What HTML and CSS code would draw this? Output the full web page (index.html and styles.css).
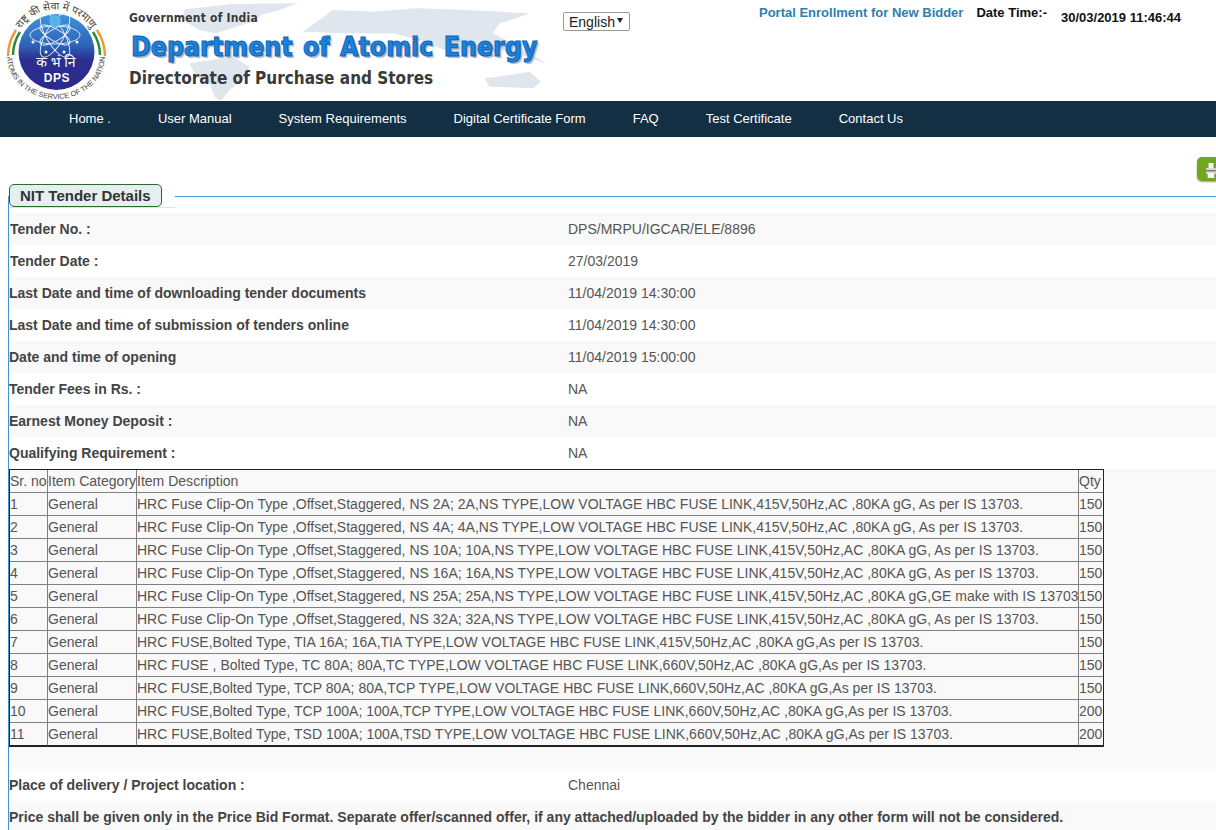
FILE: index.html
```html
<!DOCTYPE html>
<html lang="en">
<head>
<meta charset="utf-8">
<title>NIT Tender Details</title>
<link rel="stylesheet" href="styles.css">
</head>
<body>
<header class="site-header">
  <svg class="map" viewBox="0 0 1243 303" aria-hidden="true">
    <path d="M155 28 L300 12 L495 10 L440 30 L385 45 L360 65 L310 80 L250 100 L200 90 L150 60 Z"/>
    <path d="M510 95 L560 60 L600 30 L720 35 L850 25 L1000 30 L1190 40 L1150 55 L1100 70 L1080 100 L1140 130 L1240 190 L1190 175 L1130 150 L1040 165 L950 155 L860 120 L780 100 L640 100 Z"/>
    <path d="M170 190 L300 170 L350 200 L330 240 L290 270 L265 303 L245 290 L230 250 L190 230 Z"/>
    <path d="M1055 235 L1130 225 L1190 215 L1225 245 L1200 265 L1130 262 L1070 260 Z"/>
  </svg>
  <svg class="logo" viewBox="0 0 112 101" role="img" aria-label="DPS emblem">
    <defs>
      <linearGradient id="globe" x1="0" y1="0" x2="0" y2="1">
        <stop offset="0" stop-color="#3f95da"/>
        <stop offset=".42" stop-color="#2f62b6"/>
        <stop offset=".6" stop-color="#2b2f90"/>
        <stop offset="1" stop-color="#2b2a8c"/>
      </linearGradient>
      <path id="arcTop" d="M17 36 A42 42 0 0 1 95 36"/>
      <path id="arcBottom" d="M7 56 A49 43 0 0 0 105 56"/>
    </defs>
    <circle cx="56.5" cy="52" r="38" fill="url(#globe)"/>
    <g class="orbits">
      <ellipse cx="55" cy="35" rx="25" ry="9"/>
      <ellipse cx="55" cy="35" rx="25" ry="9" transform="rotate(60 55 35)"/>
      <ellipse cx="55" cy="35" rx="25" ry="9" transform="rotate(120 55 35)"/>
      <ellipse cx="55" cy="35" rx="17" ry="6" transform="rotate(30 55 35)"/>
      <ellipse cx="55" cy="35" rx="17" ry="6" transform="rotate(150 55 35)"/>
    </g>
    <circle class="sun" cx="55" cy="21" r="6"/>
    <circle class="dot" cx="33" cy="42" r="1.5"/><circle class="dot" cx="77" cy="42" r="1.5"/>
    <circle class="dot" cx="46" cy="52" r="1.5"/><circle class="dot" cx="64" cy="52" r="1.5"/>
    <path class="arc-o" d="M8 56 A48 48 0 0 1 16 30"/>
    <path class="arc-g" d="M13 55 A43 43 0 0 1 20 32"/>
    <path class="arc-o" d="M105 56 A48 48 0 0 0 97 30"/>
    <path class="arc-g" d="M100 55 A43 43 0 0 0 93 32"/>
    <text class="hi-top"><textPath href="#arcTop" startOffset="50%" text-anchor="middle">राष्ट्र की सेवा में परमाणु</textPath></text>
    <text class="en-ring"><textPath href="#arcBottom" startOffset="50%" text-anchor="middle">ATOMS IN THE SERVICE OF THE NATION</textPath></text>
    <text class="hi-mid" x="56" y="67" text-anchor="middle">क भं नि</text>
    <text class="dps" x="57" y="82" text-anchor="middle">DPS</text>
  </svg>
  <div class="brand">
    <div class="gov">Government of India</div>
    <div class="dept">Department of Atomic Energy</div>
    <div class="dir">Directorate of Purchase and Stores</div>
  </div>
  <div class="lang"><select class="lang-select"><option>English</option><option>Hindi</option></select></div>
  <div class="info">
    <a class="portal" href="#">Portal Enrollment for New Bidder</a>
    <span class="dt-label">Date Time:-</span>
    <span class="dt-value">30/03/2019 11:46:44</span>
  </div>
</header>
<nav class="nav">
  <a href="#">Home .</a>
  <a href="#">User Manual</a>
  <a href="#">System Requirements</a>
  <a href="#">Digital Certificate Form</a>
  <a href="#">FAQ</a>
  <a href="#">Test Certificate</a>
  <a href="#">Contact Us</a>
</nav>
<div class="tools">
  <button class="print" type="button" aria-label="Print">
    <svg viewBox="0 0 12 17" width="10" height="17" preserveAspectRatio="none"><rect x="3" y="1" width="6" height="5" fill="#f2f2f2"/><rect x="0" y="6" width="12" height="6" rx="1" fill="#d9d9d9"/><rect x="0" y="8" width="12" height="1.4" fill="#6f7f6f"/><rect x="2" y="11" width="8" height="5" fill="#f5f5f5"/></svg>
  </button>
</div>
<fieldset class="panel">
  <legend class="panel-legend"><span class="panel-title">NIT Tender Details</span></legend>
  <div class="row tint"><div class="label in">Tender No. :</div><div class="value">DPS/MRPU/IGCAR/ELE/8896</div></div>
  <div class="row"><div class="label in">Tender Date :</div><div class="value">27/03/2019</div></div>
  <div class="row tint"><div class="label">Last Date and time of downloading tender documents</div><div class="value">11/04/2019 14:30:00</div></div>
  <div class="row"><div class="label">Last Date and time of submission of tenders online</div><div class="value">11/04/2019 14:30:00</div></div>
  <div class="row tint"><div class="label">Date and time of opening</div><div class="value">11/04/2019 15:00:00</div></div>
  <div class="row"><div class="label">Tender Fees in Rs. :</div><div class="value">NA</div></div>
  <div class="row tint"><div class="label">Earnest Money Deposit :</div><div class="value">NA</div></div>
  <div class="row"><div class="label">Qualifying Requirement :</div><div class="value">NA</div></div>
  <div class="table-wrap tint">
    <table class="items">
      <colgroup><col class="c1"><col class="c2"><col class="c3"><col class="c4"></colgroup>
      <tr><td>Sr. no</td><td>Item Category</td><td>Item Description</td><td>Qty</td></tr>
      <tr><td>1</td><td>General</td><td>HRC Fuse Clip-On Type ,Offset,Staggered, NS 2A; 2A,NS TYPE,LOW VOLTAGE HBC FUSE LINK,415V,50Hz,AC ,80KA gG, As per IS 13703.</td><td>150</td></tr>
      <tr><td>2</td><td>General</td><td>HRC Fuse Clip-On Type ,Offset,Staggered, NS 4A; 4A,NS TYPE,LOW VOLTAGE HBC FUSE LINK,415V,50Hz,AC ,80KA gG, As per IS 13703.</td><td>150</td></tr>
      <tr><td>3</td><td>General</td><td>HRC Fuse Clip-On Type ,Offset,Staggered, NS 10A; 10A,NS TYPE,LOW VOLTAGE HBC FUSE LINK,415V,50Hz,AC ,80KA gG, As per IS 13703.</td><td>150</td></tr>
      <tr><td>4</td><td>General</td><td>HRC Fuse Clip-On Type ,Offset,Staggered, NS 16A; 16A,NS TYPE,LOW VOLTAGE HBC FUSE LINK,415V,50Hz,AC ,80KA gG, As per IS 13703.</td><td>150</td></tr>
      <tr><td>5</td><td>General</td><td>HRC Fuse Clip-On Type ,Offset,Staggered, NS 25A; 25A,NS TYPE,LOW VOLTAGE HBC FUSE LINK,415V,50Hz,AC ,80KA gG,GE make with IS 13703</td><td>150</td></tr>
      <tr><td>6</td><td>General</td><td>HRC Fuse Clip-On Type ,Offset,Staggered, NS 32A; 32A,NS TYPE,LOW VOLTAGE HBC FUSE LINK,415V,50Hz,AC ,80KA gG, As per IS 13703.</td><td>150</td></tr>
      <tr><td>7</td><td>General</td><td>HRC FUSE,Bolted Type, TIA 16A; 16A,TIA TYPE,LOW VOLTAGE HBC FUSE LINK,415V,50Hz,AC ,80KA gG,As per IS 13703.</td><td>150</td></tr>
      <tr><td>8</td><td>General</td><td>HRC FUSE , Bolted Type, TC 80A; 80A,TC TYPE,LOW VOLTAGE HBC FUSE LINK,660V,50Hz,AC ,80KA gG,As per IS 13703.</td><td>150</td></tr>
      <tr><td>9</td><td>General</td><td>HRC FUSE,Bolted Type, TCP 80A; 80A,TCP TYPE,LOW VOLTAGE HBC FUSE LINK,660V,50Hz,AC ,80KA gG,As per IS 13703.</td><td>150</td></tr>
      <tr><td>10</td><td>General</td><td>HRC FUSE,Bolted Type, TCP 100A; 100A,TCP TYPE,LOW VOLTAGE HBC FUSE LINK,660V,50Hz,AC ,80KA gG,As per IS 13703.</td><td>200</td></tr>
      <tr><td>11</td><td>General</td><td>HRC FUSE,Bolted Type, TSD 100A; 100A,TSD TYPE,LOW VOLTAGE HBC FUSE LINK,660V,50Hz,AC ,80KA gG,As per IS 13703.</td><td>200</td></tr>
    </table>
  </div>
  <div class="row"><div class="label">Place of delivery / Project location :</div><div class="value">Chennai</div></div>
  <div class="row tint"><div class="label wide">Price shall be given only in the Price Bid Format. Separate offer/scanned offer, if any attached/uploaded by the bidder in any other form will not be considered.</div></div>
</fieldset>
</body>
</html>
```
FILE: styles.css
```css
html, body { margin: 0; padding: 0; overflow: hidden; height: 830px; }
body { font-family: "Liberation Sans", Arial, sans-serif; font-size: 14px; color: #555; background: #fff; width: 1216px; }

.site-header { position: relative; display: flex; height: 101px; }
.map { position: absolute; left: 130px; top: 0; width: 420px; height: 101px; fill: #dfe6ee; }
.logo { position: relative; flex: none; width: 112px; height: 101px; }
.orbits ellipse { fill: none; stroke: #e8f2fb; stroke-width: .9; }
.sun { fill: #5ab2ea; }
.dot { fill: #fff; }
.arc-o, .arc-g { fill: none; stroke-width: 2.4; }
.arc-o { stroke: #ef9a2e; }
.arc-g { stroke: #2c8a3c; }
.hi-top { font-family: "Noto Sans", "Noto Sans CJK SC", sans-serif; font-size: 10.5px; fill: #444; }
.en-ring { font-family: "Liberation Sans", sans-serif; font-size: 7.3px; fill: #444; }
.hi-mid { font-family: "Noto Sans", sans-serif; font-size: 14px; fill: #fff; }
.dps { font-family: "Liberation Sans", sans-serif; font-weight: bold; font-size: 12px; letter-spacing: .6px; fill: #fff; }

.brand { position: relative; flex: none; width: 434px; margin-left: 17px; font-family: "DejaVu Sans Condensed", "DejaVu Sans", sans-serif; font-weight: bold; color: #3a3a3a; white-space: nowrap; }
.gov { font-size: 12px; line-height: 14px; margin-top: 11px; letter-spacing: .2px; }
.dept { font-size: 26.5px; line-height: 34px; margin: 5px 0 0 2px; word-spacing: 2px; color: #1c82dc; -webkit-text-stroke: 1px #0c64b8; text-shadow: 2px 2px 1px #a9b6c6; }
.dir { font-size: 17px; line-height: 20px; margin-top: 4px; }

.lang { position: relative; flex: none; width: 67px; height: 19px; margin-top: 12px; }
.lang::after { content: ""; position: absolute; right: 7px; top: 6px; border-style: solid; border-width: 5px 3px 0; border-color: #222 transparent transparent; pointer-events: none; }
.lang-select { display: block; appearance: none; width: 67px; height: 19px; padding: 0 0 0 5px; font-family: "Liberation Sans", Arial, sans-serif; font-size: 14px; color: #222; background: #fff; border: 1px solid #999; border-radius: 2px; }

.info { position: relative; flex: 1; display: flex; align-items: flex-start; padding-left: 129px; white-space: nowrap; font-weight: bold; font-size: 13px; color: #111; }
.portal { color: #2d7fae; text-decoration: none; margin-top: 6px; line-height: 14px; }
.dt-label { margin: 6px 0 0 13px; line-height: 14px; }
.dt-value { margin: 11px 0 0 14px; line-height: 14px; }

.nav { display: flex; height: 36px; align-items: center; padding: 0 0 1px 69px; box-sizing: border-box; gap: 47px; background: #132f44; }
.nav a { color: #fff; text-decoration: none; font-size: 13px; white-space: nowrap; }

.tools { display: flex; height: 24px; padding: 20px 0 0 1197px; }
.print { flex: none; width: 40px; height: 24px; padding: 3px 0 0 9px; border: 0; border-radius: 5px; background: #6fa81c; box-shadow: 0 1px 2px #999; text-align: left; }
.print svg { display: block; }

.panel { width: 1300px; margin: 3px 0 0 8px; padding: 5px 0 0; box-sizing: border-box; border: 1px solid #3d96d0; border-width: 1px 0 0 1px; min-inline-size: 0; }
.panel-legend { margin: 0; padding: 0 13px 0 0; border-bottom: 1px solid #e2e2e2; }
.panel-title { display: block; padding: 0 10px; height: 21px; line-height: 21px; font-size: 15px; font-weight: bold; color: #333; background: #e4eff0; border: 1px solid #2a6a2a; border-radius: 5px; }

.row { display: grid; grid-template-columns: 559px 1fr; align-items: center; height: 32px; }
.tint { background: #f9f9f9; }
.label { font-weight: bold; color: #444; white-space: nowrap; }
.label.in { padding-left: 1px; }
.label.wide { grid-column: 1 / -1; }
.value { color: #555; }

.table-wrap { padding-bottom: 22px; }
.items { table-layout: fixed; width: 1095px; box-sizing: border-box; border-collapse: separate; border-spacing: 0; border: 1px solid #222; color: #555; letter-spacing: .014px; }
.items td { height: 22px; padding: 0; border: solid #808080; border-width: 0 1px 1px 0; white-space: nowrap; overflow: visible; }
.items td:last-child { border-right: 0; }
.items tr:last-child td { border-bottom-color: #222; }
.c1 { width: 38px; } .c2 { width: 89px; } .c3 { width: 942px; } .c4 { width: 24px; }
```
